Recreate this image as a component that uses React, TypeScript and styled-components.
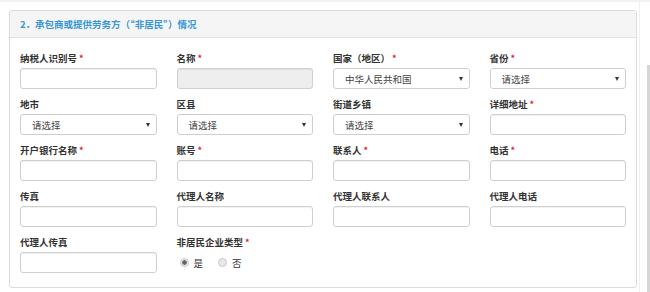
import styled, { createGlobalStyle } from "styled-components";

const GlobalStyle = createGlobalStyle`
    html, body {
        margin: 0;
        padding: 0;
        background: #fff;
    }
    body {
        font-family: "Noto Sans CJK SC", "Liberation Sans", sans-serif;
        font-size: 9.5px;
        color: #333;
    }
`;

type FieldType = {
    label: string;
    required?: boolean;
    kind?: "input" | "disabled" | "select" | "radio";
    value?: string;
};

const fields: FieldType[] = [
    {label: "纳税人识别号", required: true},
    {label: "名称", required: true, kind: "disabled"},
    {label: "国家（地区）", required: true, kind: "select", value: "中华人民共和国"},
    {label: "省份", required: true, kind: "select", value: "请选择"},
    {label: "地市", kind: "select", value: "请选择"},
    {label: "区县", kind: "select", value: "请选择"},
    {label: "街道乡镇", kind: "select", value: "请选择"},
    {label: "详细地址", required: true},
    {label: "开户银行名称", required: true},
    {label: "账号", required: true},
    {label: "联系人", required: true},
    {label: "电话", required: true},
    {label: "传真"},
    {label: "代理人名称"},
    {label: "代理人联系人"},
    {label: "代理人电话"},
    {label: "代理人传真"},
    {label: "非居民企业类型", required: true, kind: "radio"},
];

const Control = ({field}: { field: FieldType }) => {
    if (field.kind === "select") {
        return (
            <Select>
                <span>{field.value}</span>
                <Caret/>
            </Select>
        );
    }
    if (field.kind === "radio") {
        return (
            <RadioGroup>
                <RadioOption>
                    <Radio checked/>
                    是
                </RadioOption>
                <RadioOption>
                    <Radio/>
                    否
                </RadioOption>
            </RadioGroup>
        );
    }
    return <Input disabled={field.kind === "disabled"}/>;
};

export default function App() {
    return (
        <>
            <GlobalStyle/>
            <Page>
                <Content>
                    <Panel>
                        <PanelHeader>2．承包商或提供劳务方（“非居民”）情况</PanelHeader>
                        <PanelBody>
                            {fields.map((f) => (
                                <Field key={f.label}>
                                    <Label>
                                        {f.label}
                                        {f.required && <Star>*</Star>}
                                    </Label>
                                    <Control field={f}/>
                                </Field>
                            ))}
                        </PanelBody>
                    </Panel>
                </Content>
                <ScrollTrack>
                    <ScrollThumb/>
                </ScrollTrack>
            </Page>
        </>
    );
}

const Page = styled.div`
    display: flex;
    width: 650px;
    height: 292px;
    border-top: 2px solid #f2f2f2;
    box-sizing: border-box;
    overflow: hidden;
`

const Content = styled.div`
    width: 640px;
    padding: 8px 0 0 9px;
    box-sizing: border-box;
    border-right: 1px solid #f0f0f0;
`

const Panel = styled.div`
    width: 628px;
    border: 1px solid #dcdcdc;
    border-radius: 3px;
    box-sizing: border-box;
    overflow: hidden;
`

const PanelHeader = styled.div`
    height: 26px;
    line-height: 26px;
    padding-left: 10px;
    background: #f5f5f5;
    border-bottom: 1px solid #e2e2e2;
    color: #3696d8;
    font-weight: bold;
    font-size: 9.5px;
`

const PanelBody = styled.div`
    display: grid;
    grid-template-columns: repeat(4, 1fr);
    column-gap: 20px;
    padding: 13px 10px 6px;
`

const Field = styled.div`
    display: flex;
    flex-direction: column;
    margin-bottom: 8px;
`

const Label = styled.label`
    height: 14px;
    line-height: 14px;
    margin-bottom: 3px;
    font-weight: bold;
    color: #333;
`

const Star = styled.span`
    color: #e02020;
    margin-left: 2px;
    font-size: 9px;
`

const Input = styled.input`
    height: 21px;
    width: 100%;
    box-sizing: border-box;
    border: 1px solid #cfcfcf;
    border-radius: 3px;
    box-shadow: inset 0 1px 1px rgba(0, 0, 0, 0.06);
    background: #fff;
    padding: 0 8px;
    font: inherit;

    &:disabled {
        background: #eeeeee;
    }
`

const Select = styled.div`
    height: 21px;
    box-sizing: border-box;
    border: 1px solid #cfcfcf;
    border-radius: 3px;
    background: #fff;
    display: flex;
    align-items: center;
    justify-content: space-between;
    padding: 0 6px 0 11px;
    color: #444;
`

const Caret = styled.span`
    width: 0;
    height: 0;
    border-left: 2.5px solid transparent;
    border-right: 2.5px solid transparent;
    border-top: 4px solid #333;
`

const RadioGroup = styled.div`
    height: 21px;
    display: flex;
    align-items: center;
    gap: 15px;
    padding-left: 3px;
`

const RadioOption = styled.span`
    display: flex;
    align-items: center;
    gap: 5px;
    color: #333;
`

const Radio = styled.span<{ checked?: boolean }>`
    width: 7px;
    height: 7px;
    border-radius: 50%;
    border: 1px solid #c8c8c8;
    background: ${(p) => (p.checked ? "radial-gradient(circle, #666 0 2px, #e8e8e8 2.5px)" : "#e8e8e8")};
`

const ScrollTrack = styled.div`
    flex: 1;
    padding-top: 63px;
    display: flex;
    justify-content: flex-end;
`

const ScrollThumb = styled.div`
    width: 3px;
    height: 230px;
    background: #d6d6d6;
`
